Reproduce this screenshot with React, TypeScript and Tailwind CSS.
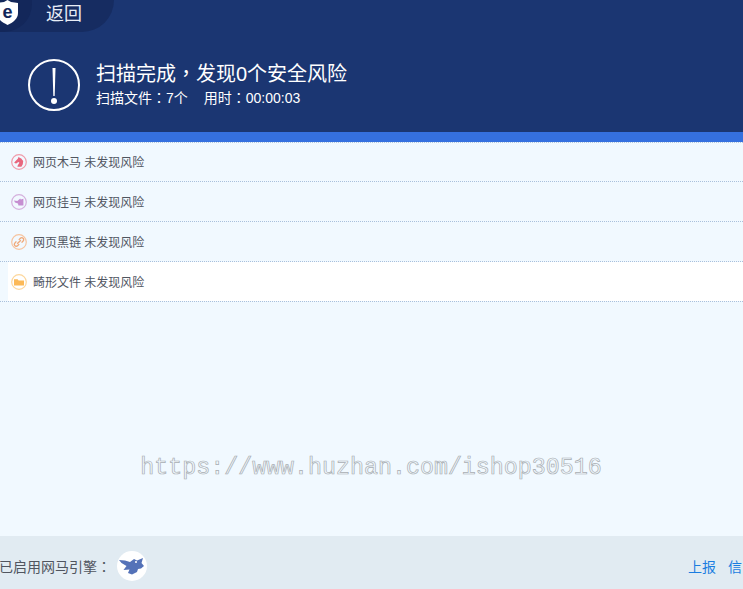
const cjk = "font-['Liberation_Sans','Noto_Sans_CJK_SC',sans-serif]";
// the reference sets full-width punctuation centred in its cell
const punct = "font-['Noto_Sans_CJK_TC',sans-serif]";

function ItemIcon({ kind }: { kind: string }) {
  const colors: Record<string, string> = {
    trojan: "#f09cab",
    hang: "#d5b0dd",
    link: "#f6c4a0",
    odd: "#fdd79c",
  };
  return (
    <svg width="16" height="16" viewBox="0 0 16 16" className="shrink-0 -mt-[2px]">
      <circle cx="8" cy="8" r="7.3" fill="none" stroke={colors[kind]} strokeWidth="1.2" />
      {kind === "trojan" && (
        <path d="M3.2 8.6 7 4.6l.6-1.8 1 1 1.6.6 2 2.6-.4 3.2-1.4 2.6H6.400l.4-1.600 1.600-2.400-1-.8-2.200 1.400-1.200-.2z" fill="#e8677e" />
      )}
      {kind === "hang" && (
        <path d="M3 6.400 6.400 7l2.800-2.400.6.8 2.600-.6v6.800H7.400l-.4-2.200-3-.8z" fill="#c68fd1" />
      )}
      {kind === "link" && (
        <g fill="none" stroke="#f0a878" strokeWidth="1.3">
          <path d="M5.400 7.400 3.900 9a1.900 1.900 0 0 0 2.700 2.700l1.600-1.600" />
          <path d="M7.800 5.900l1.600-1.600A1.900 1.900 0 0 1 12.100 7l-1.500 1.600" />
          <path d="M6.200 9.800 9.800 6.200" />
        </g>
      )}
      {kind === "odd" && (
        <path d="M3 5.200h3.600l1 1.200H13v5.200H3z" fill="#fcb957" />
      )}
    </svg>
  );
}

const rows = [
  { kind: "trojan", label: "网页木马" },
  { kind: "hang", label: "网页挂马" },
  { kind: "link", label: "网页黑链" },
  { kind: "odd", label: "畸形文件" },
];

export default function App() {
  return (
    <div className={`w-[743px] h-[589px] overflow-hidden flex flex-col bg-[#f1f9ff] ${cjk}`}>
      {/* header */}
      <div className="h-[132px] bg-[#1b3672] shrink-0">
        <div className="w-[114px] h-8 bg-[#162c61] rounded-br-[32px] flex items-center">
          <div className="w-8 h-8 bg-[#13275a] rounded-br-[28px] flex items-start shrink-0">
            <svg width="23" height="26" viewBox="0 0 23 26" className="-ml-[4px] shrink-0">
              <path d="M11.500 0 15 2l7 1v10c0 6-5 9.500-10.500 12C6 22.500 1 19 1 13V3l7-1z" fill="#fff" />
              <text x="11.500" y="17.500" textAnchor="middle" fontSize="18" fontWeight="700" fill="#13275a" fontFamily="Liberation Sans">e</text>
            </svg>
          </div>
          <span className="ml-[14px] text-lg text-[#e8edf6] leading-none -mt-[4px]">返回</span>
        </div>
        <div className="flex items-center mt-[27px] ml-7">
          <svg width="52" height="52" viewBox="0 0 52 52" className="shrink-0">
            <circle cx="26" cy="26" r="25" fill="none" stroke="#fff" strokeWidth="2" />
            <path d="M24.500 9h3l-.8 28h-1.400z" fill="#fff" />
            <circle cx="26" cy="42" r="3" fill="#fff" />
          </svg>
          <div className="ml-4 -mt-1 text-white">
            <div className="text-xl leading-7">
              扫描完成<span className={punct}>，</span>发现0个安全风险
            </div>
            <div className="text-sm leading-[18px]">
              扫描文件<span className={punct}>：</span>7个
              <span className="ml-4">
                用时<span className={punct}>：</span>00:00:03
              </span>
            </div>
          </div>
        </div>
      </div>
      <div className="h-[10px] bg-[#3570df] shrink-0" />

      {/* list */}
      <div className="border-t border-dotted border-[#b5c9dd]">
        {rows.map((r, i) => (
          <div key={r.kind} className={`border-b border-dotted border-[#a9c0dc] ${i === 0 ? "h-[39px]" : "h-10"}`}>
            <div
              className={`h-full flex items-center pt-[2px] text-xs text-[#50555f] ${
                i === 3 ? "bg-white ml-2 pl-[3px]" : "pl-[11px]"
              }`}
            >
              <ItemIcon kind={r.kind} />
              <span className="ml-[6px]">{r.label} 未发现风险</span>
            </div>
          </div>
        ))}
      </div>

      {/* watermark */}
      <div className="flex-1 flex flex-col items-center">
        <div className="mt-[150px] ml-[-1px] opacity-[0.99] font-['Liberation_Mono',monospace] text-[23.3px] leading-8 text-transparent [-webkit-text-stroke:0.7px_#a8adb1]">
          https://www.huzhan.com/ishop30516
        </div>
      </div>

      {/* footer */}
      <div className="h-[53px] bg-[#e1ebf2] shrink-0 flex items-center justify-between text-sm pt-[8px] pr-px">
        <div className="flex items-center text-[#50555f] -mt-[1px] -ml-px">
          <span>
            已启用网马引擎<span className={punct}>：</span>
          </span>
          <div className="w-[30px] h-[30px] rounded-full bg-white ml-[6px]">
            <svg width="30" height="30" viewBox="0 0 30 30">
              <path d="M2 9l6 .5 5 1.500 4-3 3 1.500 6-2.500-1.500 5 2.500 3-3 2.500-3 .5-1 3-5 2.500-4-1.500 1.500-3.500-6 .5 3-4-5-3z" fill="#5472b8" />
              <circle cx="19" cy="11" r="1" fill="#fff" />
            </svg>
          </div>
        </div>
        <div className="flex items-center text-[#1a7de0] whitespace-nowrap shrink-0">
          <span>上报</span>
          <span className="ml-3">信</span>
        </div>
      </div>
    </div>
  );
}
